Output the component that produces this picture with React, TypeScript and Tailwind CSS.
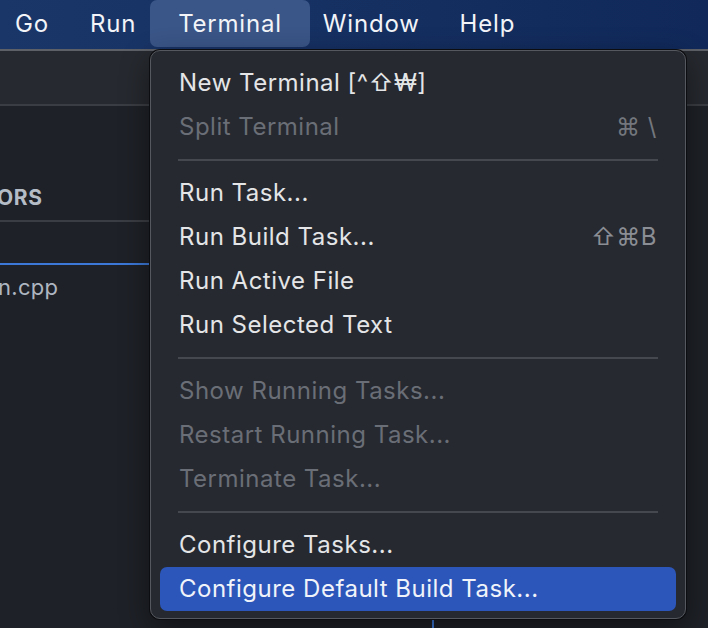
import React from "react";

type Item =
  | { type: "item"; label: string; shortcut?: string; disabled?: boolean; active?: boolean }
  | { type: "sep" };

const items: Item[] = [
  { type: "item", label: "New Terminal [^⇧₩]" },
  { type: "item", label: "Split Terminal", shortcut: "⌘ \\", disabled: true },
  { type: "sep" },
  { type: "item", label: "Run Task..." },
  { type: "item", label: "Run Build Task...", shortcut: "⇧⌘B" },
  { type: "item", label: "Run Active File" },
  { type: "item", label: "Run Selected Text" },
  { type: "sep" },
  { type: "item", label: "Show Running Tasks...", disabled: true },
  { type: "item", label: "Restart Running Task...", disabled: true },
  { type: "item", label: "Terminate Task...", disabled: true },
  { type: "sep" },
  { type: "item", label: "Configure Tasks..." },
  { type: "item", label: "Configure Default Build Task...", active: true },
];

export default function App() {
  return (
    <div
      className="relative w-[708px] h-[628px] overflow-hidden bg-[#1e2127] flex flex-col"
      style={{ fontFamily: 'Inter, "Noto Sans", "DejaVu Sans", sans-serif' }}
    >
      {/* macOS menu bar */}
      <div className="h-[49px] shrink-0 flex items-start bg-gradient-to-r from-[#1a3669] to-[#10295a] text-[24px] tracking-[0.8px] text-[#f2f4f8] whitespace-nowrap">
        <div className="ml-[15px] h-[47px] flex items-center">Go</div>
        <div className="ml-[41px] h-[47px] flex items-center">Run</div>
        <div className="ml-[14px] h-[47px] px-[28px] flex items-center rounded-[7px] bg-[#3a5587]">Terminal</div>
        <div className="ml-[13px] h-[47px] flex items-center">Window</div>
        <div className="ml-[40px] h-[47px] flex items-center">Help</div>
      </div>
      <div className="h-[2px] shrink-0 bg-[#5d6066]" />

      {/* title / tab strip */}
      <div className="h-[53px] shrink-0 bg-[#26292f]" />
      <div className="h-[2px] shrink-0 bg-[#3a3d43]" />

      {/* workbench */}
      <div className="flex flex-1 min-h-0">
        <div className="w-[149px] shrink-0 flex flex-col overflow-hidden">
          <div className="mt-[76px] ml-[-3px] leading-[32px] text-[21px] font-bold tracking-[0.6px] text-[#b5bcc6] whitespace-nowrap">
            ORS
          </div>
          <div className="mt-[6px] h-[2px] bg-[#3a3d43]" />
          <div className="mt-[41px] h-[2px] bg-[#3b78d8]" />
          <div className="mt-[6px] ml-[-2px] leading-[32px] text-[22px] tracking-[0.3px] text-[#aeb6c1] whitespace-nowrap">
            n.cpp
          </div>
        </div>
        <div className="flex-1 flex flex-col">
          <div className="flex-1" />
          <div className="ml-[283px] w-[2px] h-[8px] bg-[#3b78d8]" />
        </div>
      </div>

      {/* Terminal dropdown menu */}
      <div className="absolute left-[150px] top-[50px] w-[536px] h-[569px] rounded-[10px] bg-[#262930] border border-[#55585e] shadow-[0_0_0_1px_#0c0d10,0_10px_30px_rgba(0,0,0,0.45)] pt-[10px] px-[9px] pb-[7px] flex flex-col">
        {items.map((it, i) =>
          it.type === "sep" ? (
            <div key={i} className="h-[22px] shrink-0 flex items-center px-[18px]">
              <div className="h-[2px] w-full bg-[#45484e]" />
            </div>
          ) : (
            <div
              key={i}
              className={
                "h-[44px] shrink-0 flex items-center justify-between px-[19px] rounded-[7px] text-[24px] tracking-[0.5px] whitespace-nowrap " +
                (it.active
                  ? "bg-[#2c56b9] text-[#f0f3fa]"
                  : it.disabled
                  ? "text-[#6a6e76]"
                  : "text-[#e4e5e7]")
              }
            >
              <span>{it.label}</span>
              {it.shortcut && (
                <span className={it.disabled ? "text-[#73777d]" : "text-[#8b8e94]"}>{it.shortcut}</span>
              )}
            </div>
          )
        )}
      </div>
    </div>
  );
}
